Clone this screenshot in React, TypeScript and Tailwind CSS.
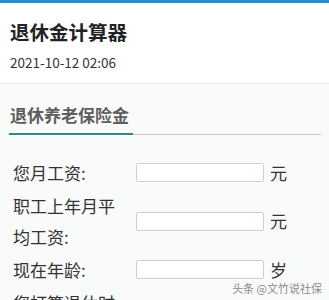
import React from "react";

const font = { fontFamily: '"Noto Sans CJK SC", "Noto Sans", sans-serif' };

function Row({ label, unit }: { label: string; unit: string }) {
    return (
        <div className="flex items-center">
            <div className="w-[112px] pl-[13px] box-content text-[17px] leading-[31px] text-[#333]">{label}</div>
            <input type="text" className="ml-[11px] w-[128px] h-[19px] border border-[#cfcfcf] rounded-[2px] bg-white outline-none" />
            <span className="ml-[6px] text-[17px] text-[#333]">{unit}</span>
        </div>
    );
}

export default function App() {
    return (
        <div className="relative w-[329px] h-[300px] overflow-hidden bg-[#f9fafa]" style={font}>
            {/* top bar */}
            <div className="h-[3px] bg-[#1d8fdb]" />

            {/* header */}
            <div className="bg-white border-b border-[#e6e7e8] px-[10px] pt-[14px] pb-[12px]">
                <h1 className="text-[19.5px] font-bold leading-[30px] text-[#222]">退休金计算器</h1>
                <div className="mt-[6px] text-[13.5px] leading-[18px] text-[#333]">2021-10-12 02:06</div>
            </div>

            {/* section */}
            <div className="pt-[19px] px-[9px]">
                <div className="flex">
                    <div className="border-b-2 border-[#2f8a8e] pl-[1px] pr-[4px] pb-[6px] text-[17px] font-semibold leading-[24px] text-[#5e5e5e]">退休养老保险金</div>
                    <div className="flex-1 border-b border-[#cccccc] mr-[-1px]" />
                </div>
            </div>

            <div className="mt-[22px] flex flex-col gap-[2px]">
                <Row label="您月工资:" unit="元" />
                <Row label="职工上年月平均工资:" unit="元" />
                <Row label="现在年龄:" unit="岁" />
                <Row label="您打算退休时年龄:" unit="岁" />
            </div>

            {/* watermark */}
            <div className="absolute right-[7px] bottom-[5px] text-[11px] leading-[13px] text-[#8a8a8a]">头条 @文竹说社保</div>
        </div>
    );
}
